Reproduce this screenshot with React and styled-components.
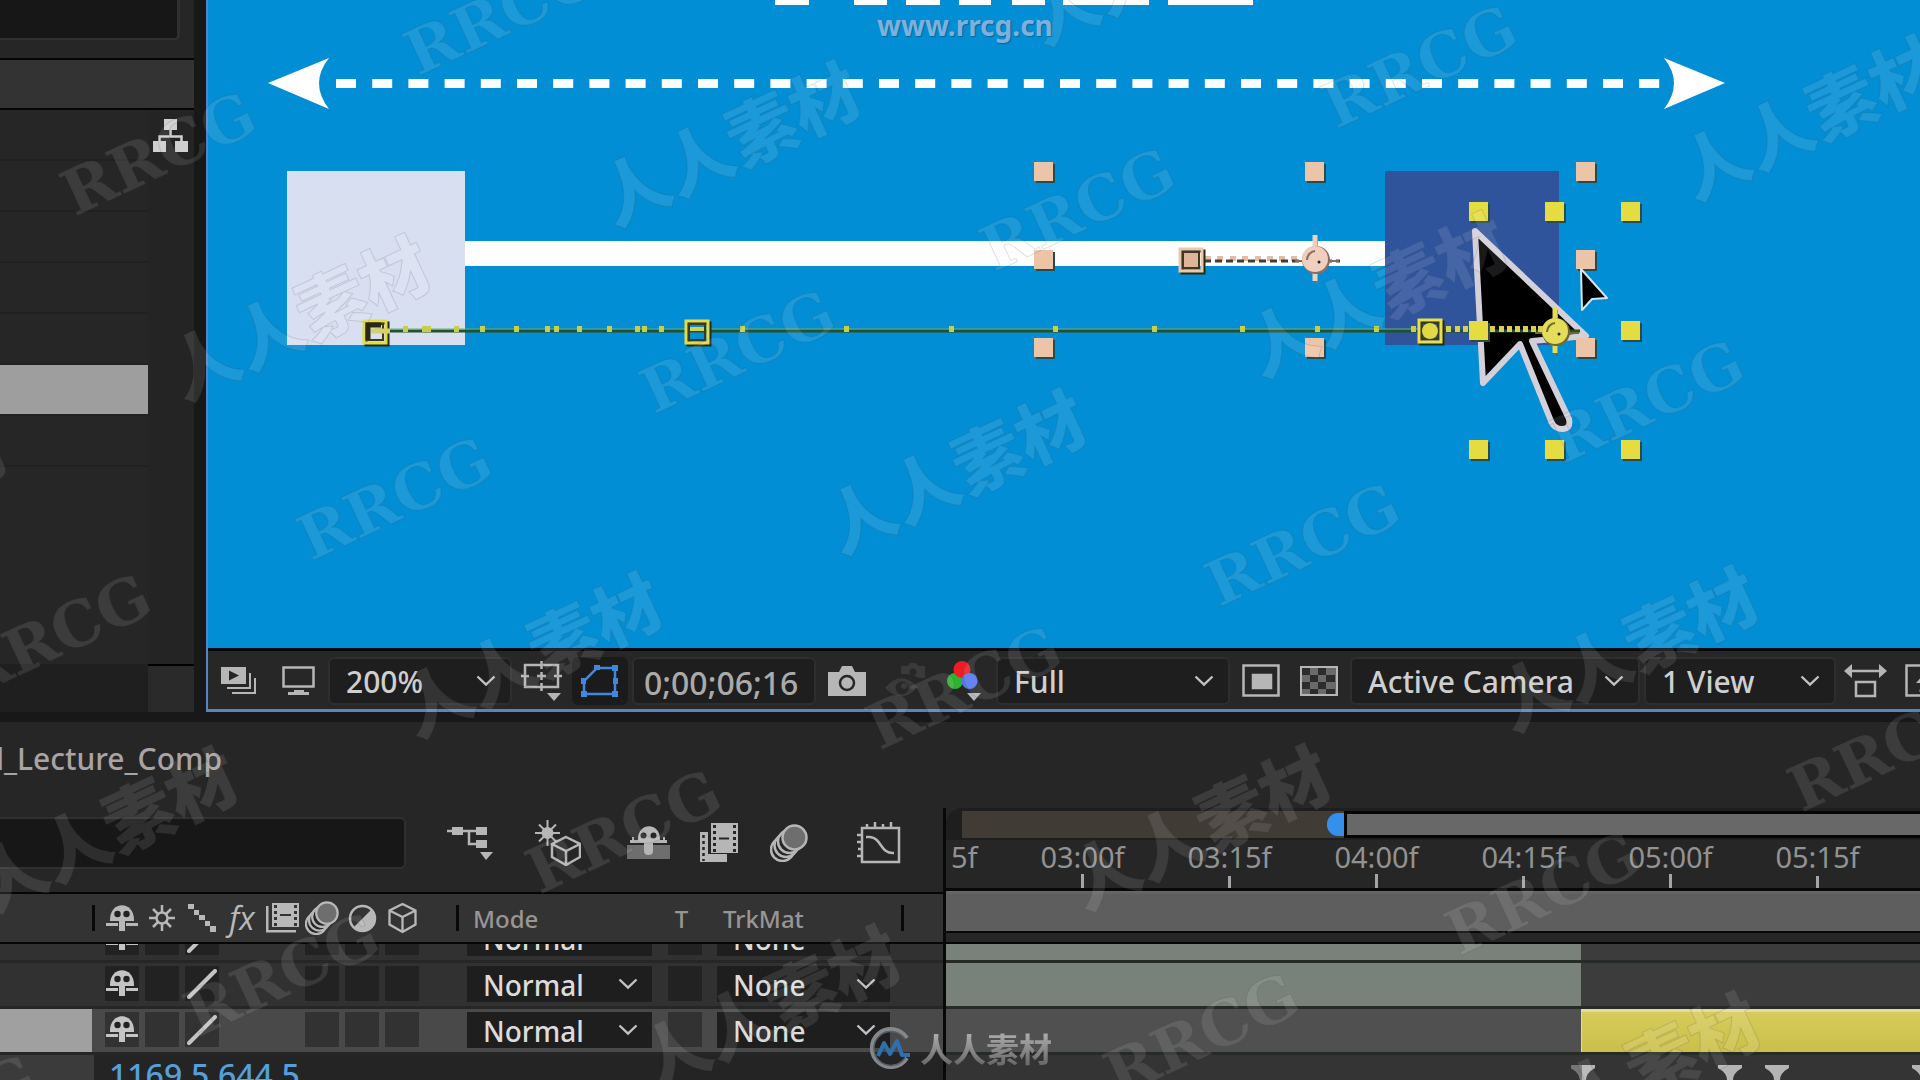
import React from "react";
import styled, { createGlobalStyle } from "styled-components";

const GlobalStyle = createGlobalStyle`
  *, *::before, *::after { box-sizing: border-box; }
  body {
    margin: 0;
    background: #181818;
    font-family: "Noto Sans", "Open Sans", "Liberation Sans", sans-serif;
    font-weight: 500;
    color: #c8c8c8;
  }
  button, input, select { font: inherit; color: inherit; }
`;

const Screen = styled.main`
  position: relative;
  display: grid;
  grid-template-rows: 712px 1fr;
  row-gap: 10px;
  height: 100vh;
  overflow: hidden;
`;

const Upper = styled.div`
  display: grid;
  grid-template-columns: 194px minmax(0, 1fr);
  column-gap: 12px;
  min-height: 0;
`;

/* ---------- project panel ---------- */

const ProjectPanel = styled.aside`
  display: flex;
  flex-direction: column;
  background: #262626;
`;

const Preview = styled.div`
  height: 40px;
  margin: 0 14px 18px 0;
  background: #171717;
  border: solid #303030;
  border-width: 0 3px 2px 0;
  border-radius: 0 0 5px 0;
`;

const ProjectHeader = styled.div`
  height: 52px;
  background: #333;
  border: solid #050505;
  border-width: 2px 0;
`;

const ProjectBody = styled.div`
  flex: 1;
  display: grid;
  grid-template-columns: 148px 1fr;
`;

const ProjectRows = styled.div`
  display: flex;
  flex-direction: column;
`;

const ProjectRow = styled.div`
  height: 51px;
  background: ${(p) => (p.$selected ? "#9e9e9e" : "transparent")};
  border-bottom: 2px solid #212121;
`;

const ProjectFooter = styled.div`
  height: 48px;
  margin-top: auto;
  background: #1f1f1f;
`;

const ProjectSide = styled.div`
  display: flex;
  flex-direction: column;
  justify-content: space-between;
  align-items: center;
  padding-top: 2px;
  background: #242424;
`;

const SideFooter = styled.div`
  width: 100%;
  height: 48px;
  background: #2a2a2a;
  border-top: 2px solid #000;
`;

/* ---------- controls ---------- */

const IconButton = styled.button`
  display: flex;
  flex: none;
  align-items: center;
  justify-content: center;
  width: ${(p) => p.$w}px;
  height: 48px;
  padding: 0;
  border: 0;
  border-radius: 6px;
  background: ${(p) => (p.$on ? "#1b1b1b" : "transparent")};
  color: ${(p) => (p.$on ? "#4088de" : "#b6b6b6")};
`;

const SelectShell = styled.label`
  position: relative;
  display: flex;
  flex: none;
  align-items: center;
  width: ${(p) => p.$w}px;
  height: ${(p) => (p.$flat ? 36 : 48)}px;
  background: #1e1e1e;
  border: ${(p) => (p.$flat ? "0" : "2px solid #2e2e2e")};
  border-radius: ${(p) => (p.$flat ? 0 : 6)}px;

  select {
    width: 100%;
    height: 100%;
    padding: 2px 0 0 16px;
    appearance: none;
    background: transparent;
    border: 0;
    font-size: ${(p) => (p.$flat ? 28 : 30)}px;
    line-height: ${(p) => (p.$flat ? 34 : 42)}px;
    color: ${(p) => (p.$flat ? "#dcdcdc" : "#cfcfcf")};
  }

  svg {
    position: absolute;
    right: 14px;
    pointer-events: none;
  }
`;

const Chevron = () => (
  <svg width="20" height="12" viewBox="0 0 20 12" fill="none" stroke="#c2c2c2" strokeWidth="2.4">
    <path d="M1.5 1.5 10 9.5 18.500 1.5" />
  </svg>
);

const Select = ({ label, value, w, flat }) => (
  <SelectShell $w={w} $flat={flat}>
    <select aria-label={label} defaultValue={value}>
      <option>{value}</option>
    </select>
    <Chevron />
  </SelectShell>
);

/* ---------- viewer ---------- */

const Viewer = styled.section`
  display: flex;
  flex-direction: column;
  min-width: 0;
  border: solid #5585c4;
  border-width: 0 0 3px 2px;
`;

const Canvas = styled.div`
  flex: 1;
  min-height: 0;
  overflow: hidden;
  background: #028ed4;

  svg { display: block; }
`;

const Toolbar = styled.div`
  display: flex;
  align-items: center;
  gap: 4px;
  height: 61px;
  padding-top: 2px;
  overflow: hidden;
  background: #272727;
  border-top: 3px solid #06090f;
`;

const TimeField = styled.input`
  flex: none;
  width: 184px;
  height: 48px;
  padding: 2px 0 0 10px;
  font-size: 32px;
  color: #aaa;
  background: #1e1e1e;
  border: 2px solid #2e2e2e;
  border-radius: 6px;
`;

const TITLE_FEET = [[775, 34], [854, 33], [906, 34], [959, 32], [1012, 33], [1063, 86], [1168, 85]];
const PEACH = [[1043, 171], [1314, 171], [1585, 171], [1043, 259], [1585, 259], [1043, 347], [1314, 347], [1585, 347]];
const YELLOW = [[1478, 211], [1554, 211], [1630, 211], [1478, 330], [1630, 330], [1478, 449], [1554, 449], [1630, 449]];
const PATH_DOTS = [405, 424, 428, 456, 482, 516, 547, 556, 579, 609, 637, 644, 661, 742, 846, 951, 1055, 1154, 1242, 1317, 1376, 1413];
const DENSE_DOTS = [1448, 1457, 1465, 1492, 1501, 1509, 1517, 1525, 1533, 1540];
const PEACH_DOTS = [1208, 1220, 1233, 1245, 1258, 1270, 1282, 1294];

const Handle = ({ x, y, color }) => (
  <g>
    <rect x={x - 7} y={y - 7} width="19" height="19" fill="#2b4a4a" />
    <rect x={x - 9} y={y - 9} width="19" height="19" fill={color} />
  </g>
);

const Keyframe = ({ x, y, color, children }) => (
  <g>
    <rect x={x - 9} y={y - 9} width="22" height="22" fill="none" stroke="#242a14" strokeWidth="3" />
    <rect x={x - 11} y={y - 11} width="22" height="22" fill="none" stroke={color} strokeWidth="3" />
    <rect x={x - 8} y={y - 8} width="16" height="16" fill="none" stroke="#3a3a20" strokeWidth="2" />
    {children}
  </g>
);

const AnchorPoint = ({ x, y, color, edge }) => (
  <g>
    <path d={`M${x + 2} ${y - 21}V${y + 25}M${x - 20} ${y + 2}H${x + 24}`} stroke={edge} strokeWidth="2" />
    <path d={`M${x} ${y - 24}V${y + 22}`} stroke={color} strokeWidth="5" />
    <circle cx={x + 1} cy={y + 1} r="14" fill={edge} />
    <circle cx={x} cy={y} r="13" fill={color} />
    <path d={`M${x - 8} ${y + 1}a9 9 0 0 1 8-9`} fill="none" stroke={edge} strokeWidth="2" />
    <circle cx={x + 4} cy={y + 3} r="1.500" fill="#222" />
  </g>
);

const Composition = () => (
  <svg width="1712" height="648" viewBox="208 0 1712 648" role="img" aria-label="Composition view">
    {TITLE_FEET.map(([x, w]) => (
      <rect key={x} x={x} y="0" width={w} height="5" fill="#fff" />
    ))}
    <path d="M268 83 329 58Q309 83 329 109Z" fill="#fff" />
    <path d="M1725 83 1664 58Q1684 83 1664 109Z" fill="#fff" />
    <path d="M336 83.500H1660" stroke="#fff" strokeWidth="9" strokeDasharray="20 16.200" />
    <rect x="287" y="171" width="178" height="174" fill="#d8dff0" />
    <rect x="465" y="241" width="920" height="25" fill="#fff" />
    <rect x="1385" y="171" width="174" height="174" fill="#30549c" />

    <path d="M1475 231 1586 336 1532 341 1569 419Q1571 429 1562 429 1554 429 1551 421L1520 344 1483 383Z" fill="#000" stroke="#d3d0da" strokeWidth="6" strokeLinejoin="round" />

    <path d="M375 331H1580" stroke="#23502e" strokeWidth="3" />
    <path d="M375 329H1420" stroke="#6fae78" strokeWidth="1" />
    {PATH_DOTS.map((x) => (
      <rect key={x} x={x - 2} y="326" width="5" height="6" fill="#c9cf45" />
    ))}
    {DENSE_DOTS.map((x) => (
      <rect key={x} x={x - 2} y="326" width="5" height="6" fill="#d9d052" />
    ))}
    <Keyframe x={375} y={332} color="#e2dc4a">
      <path d="M368 340V325H381" fill="none" stroke="#2a2812" strokeWidth="5" />
      <path d="M371 331H390" stroke="#d9cf6a" strokeWidth="5" />
    </Keyframe>
    <Keyframe x={697} y={332} color="#e2dc4a">
      <path d="M690 329H704" stroke="#d3d24a" strokeWidth="4" />
    </Keyframe>
    <Keyframe x={1430} y={331} color="#e8e04a">
      <circle cx="1430" cy="331" r="8" fill="#e2d83f" />
    </Keyframe>

    {PEACH_DOTS.map((x) => (
      <rect key={x} x={x - 3} y="256" width="6" height="5" fill="#e2bda8" />
    ))}
    <path d="M1204 261H1340" stroke="#4a3a34" strokeWidth="3" strokeDasharray="7 4" />
    <Keyframe x={1191} y={260} color="#ecc8b2">
      <rect x="1184" y="253" width="14" height="14" fill="#e0b49a" />
    </Keyframe>
    {PEACH.map(([x, y]) => (
      <Handle key={`${x}-${y}`} x={x} y={y} color="#ecc4a8" />
    ))}
    <AnchorPoint x={1315} y={259} color="#f0cfbe" edge="#8a6d60" />
    {YELLOW.map(([x, y]) => (
      <Handle key={`${x}-${y}`} x={x} y={y} color="#e5dc42" />
    ))}
    <AnchorPoint x={1555} y={331} color="#e5dc5a" edge="#6d6a2c" />

    <path d="M1581 269 1607 298 1592 299 1582 310Z" fill="#000" stroke="#d6e4ee" strokeWidth="2" strokeLinejoin="round" />
  </svg>
);

/* ---------- icons ---------- */

const TreeIcon = () => (
  <svg width="36" height="34" viewBox="0 0 36 34" fill="#cfcfcf">
    <path d="M11 0h13v11h-13zM0 22h13v11H0zM22 22h13v11H22z" />
    <path d="M17.500 11v7M6.500 22v-4.500h22V22" fill="none" stroke="#cfcfcf" strokeWidth="2.500" />
  </svg>
);

const StackPlayIcon = () => (
  <svg width="36" height="28" viewBox="0 0 36 28" fill="none" stroke="currentColor" strokeWidth="2">
    <path d="M0 0h25v17H0z" fill="currentColor" stroke="none" />
    <path d="m8 3.500 10 5-10 5z" fill="#262626" stroke="none" />
    <path d="M29 6v15H6M34 11v15H11" />
  </svg>
);

const MonitorIcon = () => (
  <svg width="34" height="30" viewBox="0 0 34 30" fill="none" stroke="currentColor" strokeWidth="2.500">
    <path d="M1.500 1.500h30v19h-30z" />
    <path d="M12 24h10v2h5v3H6v-3h6z" fill="currentColor" stroke="none" />
  </svg>
);

const GridIcon = () => (
  <svg width="42" height="40" viewBox="0 0 42 40" fill="none" stroke="currentColor" strokeWidth="2.500">
    <path d="M4 4h33v22H4zM20.500 0v8M20.500 22v8M0 15h8M33 15h8M16 15h9M20.500 11v8" />
    <path d="M26 32h14l-7 8z" fill="currentColor" stroke="none" />
  </svg>
);

const MaskIcon = () => (
  <svg width="40" height="34" viewBox="0 0 40 34" fill="none" stroke="currentColor" strokeWidth="2.500">
    <path d="M4 30V17L17 4h18v26z" />
    <path d="M14 1h6v5h-6zM32 1h6v6h-6zM1 14h5v6H1zM33 14h5v6h-5zM1 27h6v6H1zM32 27h6v6h-6z" fill="currentColor" stroke="none" />
  </svg>
);

const CameraIcon = () => (
  <svg width="38" height="30" viewBox="0 0 38 30">
    <path d="M0 6h11l3-6h10l3 6h11v24H0z" fill="currentColor" />
    <circle cx="19" cy="17" r="7" fill="none" stroke="#262626" strokeWidth="2.500" />
  </svg>
);

const EyeCameraIcon = () => (
  <svg width="42" height="36" viewBox="0 0 42 36" fill="#3a3a3a">
    <path d="M0 25Q15 6 33 24 17 42 0 25Z" />
    <circle cx="17" cy="25" r="6.500" fill="#272727" />
    <circle cx="19" cy="23" r="3" />
    <path d="M16 3h7l2-3h6l2 3h7v12h-6Q27 11 20 11h-4z" />
    <circle cx="28" cy="9" r="3.500" fill="#272727" />
  </svg>
);

const ChannelsIcon = () => (
  <svg width="36" height="40" viewBox="0 0 36 40">
    <circle cx="8" cy="20" r="8" fill="#2cb32f" />
    <circle cx="15" cy="8.500" r="8.500" fill="#ee1c25" />
    <circle cx="22.500" cy="20" r="8" fill="#5577f0" />
    <path d="M20 32h14l-7 8z" fill="#b6b6b6" />
  </svg>
);

const RegionIcon = () => (
  <svg width="38" height="34" viewBox="0 0 38 34" fill="none" stroke="currentColor" strokeWidth="2.500">
    <path d="M1.500 1.500h35v30h-35z" />
    <path d="M11 11h18v13H11z" fill="currentColor" />
  </svg>
);

const CheckerIcon = () => (
  <svg width="38" height="30" viewBox="0 0 38 30">
    <path d="M1 1h36v28H1z" fill="#6a6a6a" stroke="#b6b6b6" strokeWidth="2" />
    <path d="M2 2h8v7H2zM18 2h8v7h-8zM10 9h8v7h-8zM26 9h9v7h-9zM2 16h8v7H2zM18 16h8v7h-8zM10 23h8v5h-8zM26 23h9v5h-9z" fill="#2c2c2c" />
  </svg>
);

const AspectIcon = () => (
  <svg width="44" height="34" viewBox="0 0 44 34" fill="none" stroke="currentColor" strokeWidth="2.500">
    <path d="M6 7h32M12 18h19v14H12z" />
    <path d="M0 7 8 0v14zM43 7l-8-7v14z" fill="currentColor" stroke="none" />
  </svg>
);

const FastPreviewIcon = () => (
  <svg width="38" height="34" viewBox="0 0 38 34" fill="none" stroke="currentColor" strokeWidth="2.500">
    <path d="M1.500 1.500h35v30h-35z" />
    <path d="m20 9-9 10h6l-3 9 12-12h-7l4-7z" fill="currentColor" stroke="none" />
  </svg>
);

const FlowIcon = () => (
  <svg width="46" height="34" viewBox="0 0 46 34" fill="none" stroke="currentColor" strokeWidth="2.500">
    <path d="M0 5h30M22 5v13h8" />
    <path d="M5 1h11v8H5zM29 1h11v8H29zM29 14h11v8H29zM33 26h13l-7 8z" fill="currentColor" stroke="none" />
  </svg>
);

const StarCubeIcon = () => (
  <svg width="46" height="46" viewBox="0 0 46 46" fill="none" stroke="currentColor" strokeWidth="2.500">
    <path d="M12.500 0v26M0 13h25M4 4.500l17 17M21 4.500l-17 17" strokeWidth="2" />
    <circle cx="12.500" cy="13" r="6" fill="currentColor" stroke="none" />
    <path d="m31 17 14 7v13l-14 8-14-8V24z" fill="#262626" />
    <path d="m17 24 14 7 14-7M31 31v14" />
  </svg>
);

const ShyHideIcon = () => (
  <svg width="44" height="34" viewBox="0 0 44 34" fill="currentColor">
    <path d="M0 19h43v14H0z" fill="#6e6e6e" />
    <path d="M11 13C11-4 33-4 33 13v1h3v-3h2v3h2v3H3v-3h2v-3h2v3h4z" />
    <path d="M17 17h9v8q0 4-4.500 4T17 25z" />
    <circle cx="16.500" cy="9.500" r="3" fill="#262626" />
    <circle cx="26.500" cy="9.500" r="3" fill="#262626" />
  </svg>
);

const FilmPairIcon = () => (
  <svg width="38" height="40" viewBox="0 0 38 40" fill="currentColor">
    <path d="M0 9h8v22h19v8H0z" />
    <path d="M11 0h27v30H11z" />
    <path d="M14.500 2v28M34.500 2v28" stroke="#262626" strokeWidth="3" strokeDasharray="3 3" />
    <path d="M3.500 12v26" stroke="#262626" strokeWidth="2.500" strokeDasharray="3 3" />
    <path d="M19 15.500h10" stroke="#262626" strokeWidth="2" />
  </svg>
);

const MotionBlurIcon = ({ size = 38 }) => (
  <svg width={size} height={size} viewBox="0 0 38 38" fill="#262626" stroke="currentColor" strokeWidth="2.500">
    <circle cx="12.500" cy="25.500" r="11.500" />
    <circle cx="16" cy="21.500" r="11.500" />
    <circle cx="19.500" cy="17.500" r="11.500" />
    <circle cx="24.500" cy="13.500" r="12" fill="#6e6e6e" />
  </svg>
);

const GraphIcon = () => (
  <svg width="44" height="42" viewBox="0 0 44 42" fill="none" stroke="currentColor" strokeWidth="2.500">
    <path d="M5 6h37v34H5zM10 2v4M18 0v6M26 2v4M34 0v6M0 13h5M0 20h5M1 27h4M0 34h5" />
    <path d="M9 15h4c12 1 10 17 24 16" />
  </svg>
);

const ShyIcon = () => (
  <svg width="32" height="27" viewBox="0 0 32 27" fill="currentColor">
    <path d="M4 16C3-5 29-5 28 16z" />
    <path d="M0 18h12v3H0zM20 18h12v3H20zM13 14h6v12h-6z" />
    <circle cx="11.500" cy="9" r="3.200" fill="#222" />
    <circle cx="20.500" cy="9" r="3.200" fill="#222" />
  </svg>
);

const SunIcon = () => (
  <svg width="28" height="28" viewBox="0 0 28 28" fill="none" stroke="currentColor" strokeWidth="2.500">
    <circle cx="14" cy="14" r="5.500" />
    <path d="M14 1v7M14 20v7M1 14h7M20 14h7M5 5l5 5M18 18l5 5M23 5l-5 5M10 18l-5 5" />
  </svg>
);

const StepsIcon = () => (
  <svg width="28" height="28" viewBox="0 0 28 28" fill="currentColor">
    <path d="M0 0h6v5H0zM6 6h5v5H6zM11 11h6v5h-6zM17 17h5v5h-5zM22 22h6v6h-6z" />
  </svg>
);

const Fx = styled.i`
  font-family: "Open Sans", "Noto Sans", sans-serif;
  font-size: 32px;
  font-weight: 400;
  line-height: 36px;
`;

const FilmIcon = () => (
  <svg width="33" height="30" viewBox="0 0 33 30" fill="currentColor">
    <path d="M6 0h27v24H6zM0 3h2.500v24H30v2.500H0z" />
    <path d="M9.500 2v21M29.500 2v21" stroke="#333" strokeWidth="3" strokeDasharray="3 3" />
    <path d="M14 12h11" stroke="#333" strokeWidth="2" />
  </svg>
);

const HalfIcon = () => (
  <svg width="29" height="29" viewBox="0 0 29 29">
    <circle cx="14.500" cy="14.500" r="12.500" fill="none" stroke="currentColor" strokeWidth="2.500" />
    <path d="M23.500 5.500A12.700 12.700 0 0 1 5.500 23.500z" fill="currentColor" />
  </svg>
);

const CubeIcon = () => (
  <svg width="31" height="32" viewBox="0 0 31 32" fill="none" stroke="currentColor" strokeWidth="2.300">
    <path d="m15.500 2 13 6.500v14l-13 7.500-13-7.500v-14zM2.500 8.500l13 6.500 13-6.500M15.500 15v15" />
  </svg>
);

const SlashIcon = () => (
  <svg width="30" height="30" viewBox="0 0 30 30">
    <path d="M2 28 28 2" stroke="#c4c4c4" strokeWidth="4" strokeLinecap="round" />
  </svg>
);

/* ---------- timeline ---------- */

const Timeline = styled.section`
  display: grid;
  grid-template-rows: 86px 1fr;
  background: #262626;
  min-height: 0;
`;

const CompTitle = styled.h1`
  display: flex;
  justify-content: flex-end;
  width: 222px;
  margin: 0;
  padding-top: 18px;
  font-size: 30px;
  font-weight: 500;
  line-height: 38px;
  white-space: nowrap;
  color: #a9a3a3;
`;

const TimelineBody = styled.div`
  display: grid;
  grid-template-columns: 943px minmax(0, 1fr);
  min-height: 0;
  overflow: hidden;
`;

const LayerPane = styled.div`
  display: flex;
  flex-direction: column;
`;

const TimelineTools = styled.div`
  display: flex;
  align-items: center;
  height: 84px;
  padding-bottom: 14px;
`;

const ToolGroup = styled.div`
  display: flex;
  margin-left: ${(p) => p.$gap}px;
`;

const Search = styled.input`
  width: 406px;
  height: 52px;
  padding: 0 12px;
  background: #171717;
  border: 2px solid #2f2f2f;
  border-left: 0;
  border-radius: 0 6px 6px 0;
`;

const layerColumns = "92px 375px 185px 65px 173px 1fr";

const ColumnHeader = styled.div`
  display: grid;
  grid-template-columns: ${layerColumns};
  align-items: center;
  height: 52px;
  font-size: 24px;
  color: #9a9595;
  background: #333;
  border: solid #060606;
  border-width: 2px 0;
`;

const HeaderLabel = styled.span`
  padding: ${(p) => (p.$center ? "0 6px 0 0" : "0 0 0 6px")};
  text-align: ${(p) => (p.$center ? "center" : "left")};
`;

const Separator = styled.span`
  width: 3px;
  height: 26px;
  background: #080808;
`;

const HeaderSwitches = styled.div`
  display: flex;
  align-items: center;
  gap: 10px;
  color: #b8b8b8;

  ${Separator}:last-child { margin-left: 27px; }
`;

const SwitchGrid = styled.div`
  display: grid;
  grid-template-columns: repeat(8, 34px);
  column-gap: 6px;
  align-items: center;
  justify-items: center;
`;

const EndCell = styled.div`
  display: flex;
  padding-left: 11px;
`;

const LayerRow = styled.div`
  display: grid;
  grid-template-columns: ${layerColumns};
  flex: none;
  height: 46px;
  padding-top: 3px;
  background: ${(p) => (p.$selected ? "#494949" : "#313131")};
  border-bottom: 3px solid #262626;
  color: #c4c4c4;

  ${SwitchGrid} { margin-left: 13px; align-items: start; justify-content: start; }
`;

const LayerName = styled.div`
  margin-top: -3px;
  background: ${(p) => (p.$selected ? "#a0a0a0" : "transparent")};
`;

const ClippedRow = styled.div`
  display: flex;
  flex-direction: column;
  justify-content: flex-end;
  flex: none;
  height: 19px;
  overflow: hidden;
`;

const Cell = styled.div`
  display: flex;
  align-items: center;
  justify-content: center;
  width: 34px;
  height: 35px;
  margin: ${(p) => (p.$center ? "0 auto" : "0")};
  background: ${(p) => (p.$blank ? "transparent" : p.$selected ? "#323232" : "#222")};
`;

const PropertyRow = styled.div`
  flex: 1;
  display: grid;
  grid-template-columns: 94px 1fr;
  min-height: 0;
  background: #242424;
`;

const PropertyName = styled.div`
  background: #3b3b3b;
`;

const PropertyValue = styled.span`
  padding-left: 15px;
  font-size: 32px;
  line-height: 40px;
  color: #549fdc;
`;

const Layer = ({ selected, index }) => (
  <LayerRow $selected={selected}>
    <LayerName $selected={selected} />
    <SwitchGrid>
      <Cell $selected={selected}><ShyIcon /></Cell>
      <Cell $selected={selected} />
      <Cell $selected={selected}><SlashIcon /></Cell>
      <Cell $blank />
      <Cell $blank />
      <Cell $selected={selected} />
      <Cell $selected={selected} />
      <Cell $selected={selected} />
    </SwitchGrid>
    <Select flat w={185} label={`Mode of layer ${index}`} value="Normal" />
    <Cell $center $selected={selected} />
    <Select flat w={173} label={`Track matte of layer ${index}`} value="None" />
  </LayerRow>
);

const TrackPane = styled.div`
  display: flex;
  flex-direction: column;
  min-width: 0;
  border-left: 3px solid #080808;
`;

const Navigator = styled.div`
  display: flex;
  flex: none;
  height: 32px;
  padding: 3px 0 2px 16px;
  background: #1e1e1e;
  border-top-left-radius: 16px;
`;

const NavBefore = styled.div`
  display: flex;
  justify-content: flex-end;
  align-items: center;
  width: 382px;
  background: #403b34;
`;

const NavHandle = styled.div`
  width: 17px;
  height: 23px;
  background: #3590ec;
  border-radius: 11px 0 0 11px;
`;

const NavRange = styled.div`
  flex: 1;
  background: #686868;
  border: 3px solid #050505;
  border-right: 0;
`;

const Ruler = styled.div`
  display: flex;
  flex: none;
  height: 48px;
  overflow: hidden;
`;

const RulerMark = styled.div`
  display: flex;
  flex: none;
  flex-direction: column;
  align-items: center;
  justify-content: space-between;
  width: 147px;
  margin-left: ${(p) => (p.$first ? -84 : 0)}px;
  font-size: 29px;
  font-weight: 400;
  line-height: 34px;
  color: #929292;

  &::after {
    content: "";
    width: 3px;
    height: ${(p) => (p.$major ? 14 : 12)}px;
    background: #a5a5a5;
  }
`;

const WorkArea = styled.div`
  flex: none;
  height: 45px;
  background: linear-gradient(#696969, #5e5e5e 4px);
  border: solid #080808;
  border-width: 3px 0 2px;
`;

const TrackGap = styled.div`
  flex: none;
  height: 11px;
  border-bottom: 2px solid #060606;
`;

const Track = styled.div`
  display: flex;
  flex: none;
  height: ${(p) => p.$h}px;
  border-bottom: 3px solid #272b27;
  background: ${(p) => (p.$selected ? "#505050" : "#3c3c3c")};
`;

const Clip = styled.div`
  width: 635px;
  background: #78827a;
`;

const ActiveClip = styled.div`
  flex: 1;
  margin-left: 635px;
  background: linear-gradient(#d6cc5c, #cabf48);
  border: solid #e2dc98;
  border-width: 3px 0 0 1px;
`;

const KeyTrack = styled.div`
  flex: 1;
  min-height: 0;
  overflow: hidden;
  background: #343434;

  svg { display: block; }
`;

const MARKS = ["02:15f", "03:00f", "03:15f", "04:00f", "04:15f", "05:00f", "05:15f"];

const Keys = () => (
  <svg width="1000" height="34" viewBox="0 0 1000 34" fill="#b4b4b4">
    {[637, 784, 831, 978].map((x) => (
      <path key={x} d={`M${x - 12} 10h24v3q-9 5-9 12v9h-6v-9q0-7-9-12z`} />
    ))}
    <path d="M625 10h11v24h-2v-9q0-7-9-12z" fill="#747474" />
  </svg>
);

/* ---------- marks over the whole picture ---------- */

const Overlay = styled.div`
  position: absolute;
  inset: 0;
  overflow: hidden;
  pointer-events: none;
`;

const Stamp = styled.span`
  position: absolute;
  left: ${(p) => p.$x}px;
  top: ${(p) => p.$y}px;
  transform: translate(-50%, -50%) rotate(-25deg);
  font-family: ${(p) => (p.$cjk ? '"Noto Sans CJK SC", sans-serif' : '"DejaVu Serif", "Liberation Serif", serif')};
  font-size: ${(p) => (p.$cjk ? 70 : 62)}px;
  font-weight: ${(p) => (p.$cjk ? 900 : 700)};
  line-height: 1;
  white-space: nowrap;
  color: rgba(255, 255, 255, 0.1);
  -webkit-text-stroke: 1px rgba(60, 70, 80, 0.16);
`;

const SiteName = styled.span`
  position: absolute;
  top: 7px;
  left: 877px;
  font-size: 28px;
  font-weight: 700;
  line-height: 36px;
  color: #7fb0dc;
  text-shadow: 1px 1px 1px rgba(20, 60, 100, 0.5);
`;

const Brand = styled.div`
  position: absolute;
  left: 869px;
  bottom: 10px;
  display: flex;
  align-items: center;
  gap: 9px;
`;

const BrandName = styled.span`
  font-family: "Noto Sans CJK SC", sans-serif;
  font-size: 33px;
  font-weight: 700;
  line-height: 44px;
  color: transparent;
  background: linear-gradient(#aaa 20%, #6c6c6c 85%);
  background-clip: text;
`;

const BrandLogo = () => (
  <svg width="42" height="44" viewBox="0 0 42 44" fill="none">
    <path d="M38 12A19 19 0 1 0 38 32" stroke="#85898d" strokeWidth="4" />
    <path d="M36 13A17 17 0 1 0 36 32" stroke="#5a5e62" strokeWidth="1.500" />
    <path d="M9 30 15 17l6 11 7-13 5 14h8" stroke="#2f6fb0" strokeWidth="4" strokeLinejoin="round" />
  </svg>
);

const LATIN = [[159, 154], [502, 14], [395, 499], [738, 352], [1078, 210], [1420, 67], [54, 636], [282, 975], [624, 832], [964, 688], [1303, 545], [1647, 402], [1202, 1035], [1543, 894], [1886, 750], [-60, 1117]];
const HAN = [[728, 141], [1157, -40], [298, 315], [954, 469], [1375, 292], [1808, 115], [530, 652], [105, 827], [1198, 825], [1626, 646], [768, 1005], [1628, 1072], [-126, 498]];

export default function App() {
  return (
    <>
      <GlobalStyle />
      <Screen>
        <Upper>
          <ProjectPanel>
            <Preview />
            <ProjectHeader />
            <ProjectBody>
              <ProjectRows>
                {[0, 1, 2, 3, 4].map((i) => <ProjectRow key={i} />)}
                <ProjectRow $selected />
                <ProjectRow />
                <ProjectFooter />
              </ProjectRows>
              <ProjectSide>
                <IconButton $w={46} aria-label="Flowchart"><TreeIcon /></IconButton>
                <SideFooter />
              </ProjectSide>
            </ProjectBody>
          </ProjectPanel>

          <Viewer>
            <Canvas><Composition /></Canvas>
            <Toolbar>
              <IconButton $w={62} aria-label="Always preview"><StackPlayIcon /></IconButton>
              <IconButton $w={50} aria-label="Primary viewer"><MonitorIcon /></IconButton>
              <Select w={184} label="Magnification" value="200%" />
              <IconButton $w={52} aria-label="Grid and guides"><GridIcon /></IconButton>
              <IconButton $w={56} $on aria-label="Mask visibility"><MaskIcon /></IconButton>
              <TimeField aria-label="Preview time" defaultValue="0;00;06;16" />
              <IconButton $w={54} aria-label="Take snapshot"><CameraIcon /></IconButton>
              <IconButton $w={56} aria-label="Show snapshot"><EyeCameraIcon /></IconButton>
              <IconButton $w={54} aria-label="Channels"><ChannelsIcon /></IconButton>
              <Select w={234} label="Resolution" value="Full" />
              <IconButton $w={54} aria-label="Region of interest"><RegionIcon /></IconButton>
              <IconButton $w={54} aria-label="Transparency grid"><CheckerIcon /></IconButton>
              <Select w={290} label="3D view" value="Active Camera" />
              <Select w={192} label="View layout" value="1 View" />
              <IconButton $w={52} aria-label="Pixel aspect ratio"><AspectIcon /></IconButton>
              <IconButton $w={56} aria-label="Fast previews"><FastPreviewIcon /></IconButton>
            </Toolbar>
          </Viewer>
        </Upper>

        <Timeline>
          <CompTitle>l_Lecture_Comp</CompTitle>
          <TimelineBody>
            <LayerPane>
              <TimelineTools>
                <Search aria-label="Search layers" />
                <ToolGroup $gap={20}>
                  <IconButton $w={88} aria-label="Mini flowchart"><FlowIcon /></IconButton>
                  <IconButton $w={88} aria-label="Draft 3D"><StarCubeIcon /></IconButton>
                </ToolGroup>
                <ToolGroup $gap={12}>
                  <IconButton $w={70} aria-label="Hide shy layers"><ShyHideIcon /></IconButton>
                  <IconButton $w={70} aria-label="Frame blending"><FilmPairIcon /></IconButton>
                  <IconButton $w={70} aria-label="Motion blur"><MotionBlurIcon /></IconButton>
                </ToolGroup>
                <ToolGroup $gap={20}>
                  <IconButton $w={70} aria-label="Graph editor"><GraphIcon /></IconButton>
                </ToolGroup>
              </TimelineTools>

              <ColumnHeader>
                <span />
                <HeaderSwitches>
                  <Separator />
                  <SwitchGrid>
                    <ShyIcon />
                    <SunIcon />
                    <StepsIcon />
                    <Fx>fx</Fx>
                    <FilmIcon />
                    <MotionBlurIcon size={34} />
                    <HalfIcon />
                    <CubeIcon />
                  </SwitchGrid>
                  <Separator />
                </HeaderSwitches>
                <HeaderLabel>Mode</HeaderLabel>
                <HeaderLabel $center>T</HeaderLabel>
                <HeaderLabel>TrkMat</HeaderLabel>
                <EndCell><Separator /></EndCell>
              </ColumnHeader>

              <ClippedRow><Layer index={1} /></ClippedRow>
              <Layer index={2} />
              <Layer index={3} selected />
              <PropertyRow>
                <PropertyName />
                <PropertyValue>1169.5,644.5</PropertyValue>
              </PropertyRow>
            </LayerPane>

            <TrackPane>
              <Navigator>
                <NavBefore><NavHandle /></NavBefore>
                <NavRange />
              </Navigator>
              <Ruler>
                {MARKS.map((m, i) => (
                  <RulerMark key={m} $first={i === 0} $major={m.endsWith("00f")}>{m}</RulerMark>
                ))}
              </Ruler>
              <WorkArea />
              <TrackGap />
              <Track $h={19}><Clip /></Track>
              <Track $h={46}><Clip /></Track>
              <Track $h={46} $selected><ActiveClip /></Track>
              <KeyTrack><Keys /></KeyTrack>
            </TrackPane>
          </TimelineBody>
        </Timeline>

        <Overlay aria-hidden="true">
          {LATIN.map(([x, y]) => <Stamp key={`${x}-${y}`} $x={x} $y={y}>RRCG</Stamp>)}
          {HAN.map(([x, y]) => <Stamp key={`${x}-${y}`} $cjk $x={x} $y={y}>人人素材</Stamp>)}
          <SiteName>www.rrcg.cn</SiteName>
          <Brand>
            <BrandLogo />
            <BrandName>人人素材</BrandName>
          </Brand>
        </Overlay>
      </Screen>
    </>
  );
}
